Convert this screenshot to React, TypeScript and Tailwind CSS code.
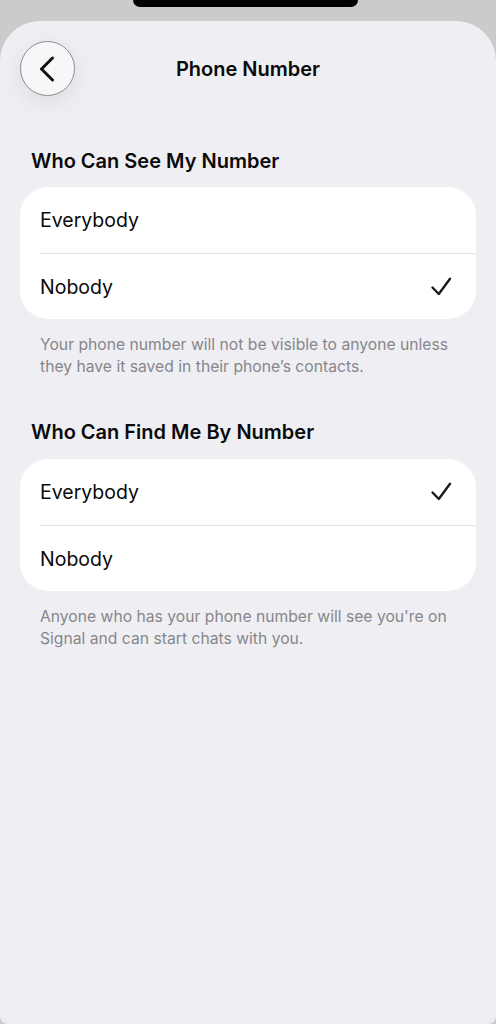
import React from "react";

const font = { fontFamily: "Inter, 'Noto Sans', 'Liberation Sans', sans-serif" };

function Check() {
  return (
    <svg width="22" height="20" viewBox="0 0 22 20" fill="none">
      <path
        d="M2.5 10.5 L8.8 17 L20 1.8"
        stroke="#1c1c1e"
        strokeWidth="2.4"
        strokeLinecap="round"
        strokeLinejoin="round"
      />
    </svg>
  );
}

function Chevron() {
  return (
    <svg width="16" height="26" viewBox="0 0 16 26" fill="none">
      <path
        d="M13.5 2 L2.5 13 L13.5 24"
        stroke="#111"
        strokeWidth="3"
        strokeLinecap="round"
        strokeLinejoin="round"
      />
    </svg>
  );
}

type Option = { label: string; selected: boolean };

function OptionCard({ options }: { options: Option[] }) {
  return (
    <div className="mx-5 bg-white rounded-[28px] overflow-hidden">
      {options.map((o, i) => (
        <div key={o.label} className="pl-5">
          <div
            className={
              "h-[66px] flex items-center justify-between pr-[24px] " +
              (i > 0 ? "border-t border-[#e3e3e8]" : "")
            }
          >
            <span className="text-[19.5px] leading-[24px] text-[#0a0a0a]">{o.label}</span>
            {o.selected && <Check />}
          </div>
        </div>
      ))}
    </div>
  );
}

export default function App() {
  return (
    <div className="w-full h-[1024px] bg-[#cbcbcb] flex flex-col overflow-hidden" style={font}>
      {/* status area with the camera cutout */}
      <div className="h-[21px] flex shrink-0">
        <div className="ml-[133px] w-[225px] h-[7px] bg-black rounded-b-[10px]" />
      </div>

      <div className="flex-1 bg-[#efeff3] rounded-t-[40px] rounded-b-[8px] flex flex-col">
        {/* navigation bar */}
        <div className="grid grid-cols-[1fr_auto_1fr] items-center pt-[20px]">
          <div className="pl-5">
            <button className="w-[55px] h-[55px] rounded-full bg-[#f7f7f9] border border-[#8c8c8c] shadow-[0_6px_22px_rgba(0,0,0,0.08)] flex items-center justify-center pr-[2px]">
              <Chevron />
            </button>
          </div>
          <div className="text-[20px] leading-[24px] font-semibold text-[#0a0a0a]">Phone Number</div>
          <div />
        </div>

        {/* who can see */}
        <div className="mt-[53px] px-[31px] text-[20px] leading-[24px] font-semibold text-[#0a0a0a]">
          Who Can See My Number
        </div>
        <div className="mt-[14px]">
          <OptionCard
            options={[
              { label: "Everybody", selected: false },
              { label: "Nobody", selected: true },
            ]}
          />
        </div>
        <p className="mt-[15px] px-[40px] text-[15.7px] leading-[22px] text-[#86868b]">
          Your phone number will not be visible to anyone unless they have it saved in their phone’s
          contacts.
        </p>

        {/* who can find */}
        <div className="mt-[42px] px-[31px] text-[20px] leading-[24px] font-semibold text-[#0a0a0a]">
          Who Can Find Me By Number
        </div>
        <div className="mt-[15px]">
          <OptionCard
            options={[
              { label: "Everybody", selected: true },
              { label: "Nobody", selected: false },
            ]}
          />
        </div>
        <p className="mt-[15px] px-[40px] text-[15.7px] leading-[22px] text-[#86868b]">
          Anyone who has your phone number will see you're on Signal and can start chats with you.
        </p>
      </div>
    </div>
  );
}
